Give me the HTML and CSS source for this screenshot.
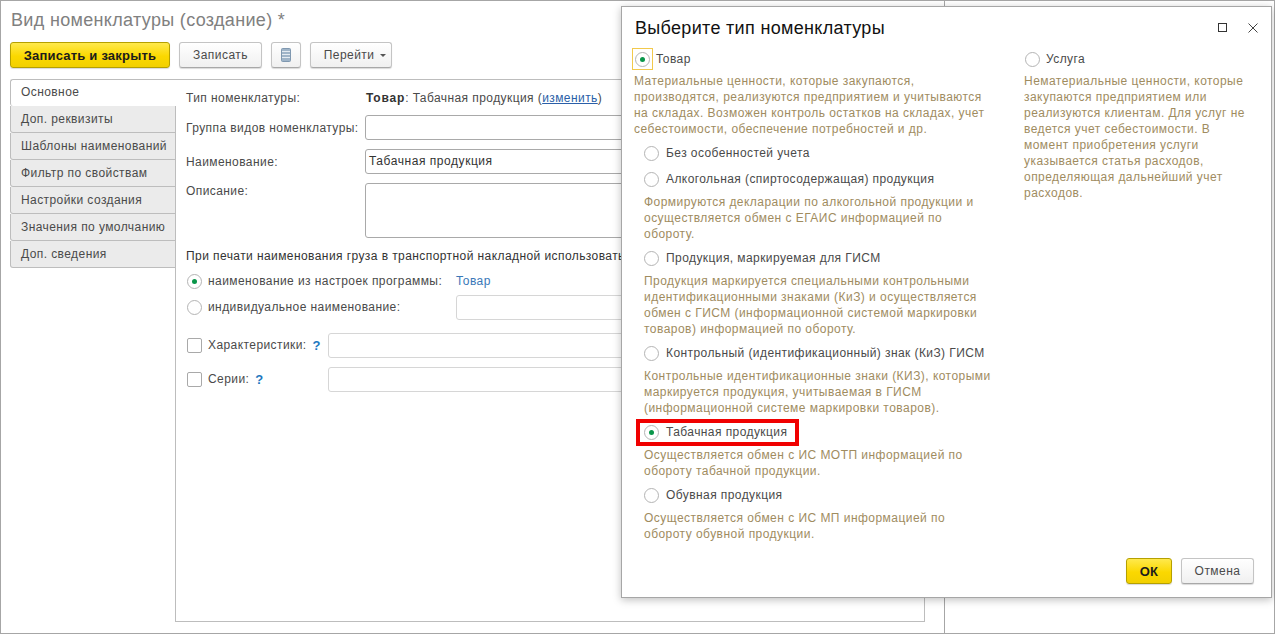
FILE: index.html
```html
<!DOCTYPE html>
<html lang="ru">
<head>
    <meta charset="UTF-8">
    <title>Вид номенклатуры (создание)</title>
    <link rel="stylesheet" href="styles.css">
</head>
<body>

<div class="page">
    <section class="form-window">
        <h1 class="form-title">Вид номенклатуры (создание) *</h1>

        <div class="toolbar">
            <button class="btn btn-primary btn-save-close">Записать и закрыть</button>
            <button class="btn btn-save">Записать</button>
            <button class="btn btn-icon" aria-label="Отчет">
                <svg width="10" height="14" viewBox="0 0 10 14">
                    <rect x="0.5" y="0.5" width="9" height="13" rx="1" fill="#9fb4c8" stroke="#7f98b0"/>
                    <path d="M1 3.5h8M1 6.5h8M1 9.5h8" stroke="#e4ebf2" stroke-width="1"/>
                </svg>
            </button>
            <button class="btn btn-goto">Перейти <span class="caret"></span></button>
        </div>

        <div class="tabs-area">
            <ul class="tabs">
                <li class="tab tab-active">Основное</li>
                <li class="tab">Доп. реквизиты</li>
                <li class="tab">Шаблоны наименований</li>
                <li class="tab">Фильтр по свойствам</li>
                <li class="tab">Настройки создания</li>
                <li class="tab">Значения по умолчанию</li>
                <li class="tab tab-last">Доп. сведения</li>
            </ul>

            <div class="panel">
                <div class="row row-type">
                    <span class="label">Тип номенклатуры:</span>
                    <span class="type-value"><b>Товар</b>: Табачная продукция (<a href="#">изменить</a>)</span>
                </div>
                <div class="row row-input">
                    <span class="label">Группа видов номенклатуры:</span>
                    <div class="field"></div>
                </div>
                <div class="row row-input">
                    <span class="label">Наименование:</span>
                    <div class="field">Табачная продукция</div>
                </div>
                <div class="row row-desc">
                    <span class="label">Описание:</span>
                    <div class="field field-area"></div>
                </div>

                <p class="print-note">При печати наименования груза в транспортной накладной использовать:</p>

                <div class="row row-radio">
                    <span class="radio radio-on"></span>
                    <span class="radio-text">наименование из настроек программы:</span>
                    <a class="value-link" href="#">Товар</a>
                </div>
                <div class="row row-radio row-radio-last">
                    <span class="radio"></span>
                    <span class="radio-text">индивидуальное наименование:</span>
                    <div class="field field-light"></div>
                </div>
                <div class="row row-check">
                    <div class="check-col">
                        <span class="check"></span>
                        <span class="check-text">Характеристики:</span>
                        <span class="hint">?</span>
                    </div>
                    <div class="field field-light"></div>
                </div>
                <div class="row row-check">
                    <div class="check-col">
                        <span class="check"></span>
                        <span class="check-text">Серии:</span>
                        <span class="hint">?</span>
                    </div>
                    <div class="field field-light"></div>
                </div>
            </div>
        </div>
    </section>
</div>

<!-- dialog over the form -->
<section class="dialog">
    <div class="dialog-head">
        <h2 class="dialog-title">Выберите тип номенклатуры</h2>
        <div class="window-btns">
            <span class="win-max"></span>
            <svg class="win-close" width="10" height="10" viewBox="0 0 10 10">
                <path d="M0.5 0.5l9 9M9.5 0.5l-9 9" stroke="#444" stroke-width="1" fill="none"/>
            </svg>
        </div>
    </div>

    <div class="dialog-body">
        <div class="col-left">
            <div class="option option-top">
                <span class="focus-box"><span class="radio radio-on"></span></span>
                <span class="option-name">Товар</span>
            </div>
            <p class="desc desc-top">Материальные ценности, которые закупаются,<br>производятся, реализуются предприятием и учитываются<br>на складах. Возможен контроль остатков на складах, учет<br>себестоимости, обеспечение потребностей и др.</p>

            <div class="sub-options">
                <div class="option option-first"><span class="radio"></span><span class="option-name">Без особенностей учета</span></div>

                <div class="option"><span class="radio"></span><span class="option-name">Алкогольная (спиртосодержащая) продукция</span></div>
                <p class="desc">Формируются декларации по алкогольной продукции и<br>осуществляется обмен с ЕГАИС информацией по<br>обороту.</p>

                <div class="option"><span class="radio"></span><span class="option-name">Продукция, маркируемая для ГИСМ</span></div>
                <p class="desc">Продукция маркируется специальными контрольными<br>идентификационными знаками (КиЗ) и осуществляется<br>обмен с ГИСМ (информационной системой маркировки<br>товаров) информацией по обороту.</p>

                <div class="option"><span class="radio"></span><span class="option-name">Контрольный (идентификационный) знак (КиЗ) ГИСМ</span></div>
                <p class="desc">Контрольные идентификационные знаки (КИЗ), которыми<br>маркируется продукция, учитываемая в ГИСМ<br>(информационной системе маркировки товаров).</p>

                <div class="option option-marked">
                    <span class="radio radio-on"></span><span class="option-name">Табачная продукция</span>
                    <span class="red-mark"></span>
                </div>
                <p class="desc">Осуществляется обмен с ИС МОТП информацией по<br>обороту табачной продукции.</p>

                <div class="option"><span class="radio"></span><span class="option-name">Обувная продукция</span></div>
                <p class="desc">Осуществляется обмен с ИС МП информацией по<br>обороту обувной продукции.</p>
            </div>
        </div>

        <div class="col-right">
            <div class="option option-top">
                <span class="radio"></span>
                <span class="option-name">Услуга</span>
            </div>
            <p class="desc desc-top">Нематериальные ценности, которые<br>закупаются предприятием или<br>реализуются клиентам. Для услуг не<br>ведется учет себестоимости. В<br>момент приобретения услуги<br>указывается статья расходов,<br>определяющая дальнейший учет<br>расходов.</p>
        </div>
    </div>

    <div class="dialog-foot">
        <button class="btn btn-primary btn-ok">ОК</button>
        <button class="btn btn-cancel">Отмена</button>
    </div>
</section>

</body>
</html>
```

FILE: styles.css
```css
* {
    box-sizing: border-box;
}

body {
    margin: 0;
    background: white;
    font-family: "Liberation Sans", Arial, sans-serif;
    font-size: 12px;
    letter-spacing: 0.42px;
    color: #4a4a4a;
    overflow: hidden;
}

.page {
    width: 1275px;
    height: 634px;
    border: 1px solid #a6a6a6;
}

.form-window {
    width: 944px;
    height: 632px;
    border-right: 1px solid #a6a6a6;
    padding: 0 19px 0 9px;
}

.form-title {
    margin: 0;
    height: 41px;
    padding: 9px 0 0 1px;
    font-size: 18px;
    font-weight: normal;
    line-height: 21px;
    letter-spacing: 0.33px;
    color: #808080;
}

/* buttons */
.btn {
    display: inline-block;
    height: 26px;
    padding: 0;
    border: 1px solid #c4c4c4;
    border-bottom-color: #a8a8a8;
    border-radius: 3px;
    background: linear-gradient(to bottom, #ffffff, #f0f0f0);
    box-shadow: 0 1px 1px rgba(0, 0, 0, 0.15);
    font: 12px "Liberation Sans", Arial, sans-serif;
    letter-spacing: 0.45px;
    color: #4a4a4a;
}

.btn-primary {
    border-color: #b5a000;
    background: linear-gradient(to bottom, #ffe94d, #fbd800 55%, #f2d000);
    font-size: 13px;
    font-weight: bold;
    letter-spacing: 0.2px;
    color: #1c1c1c;
}

.toolbar {
    display: flex;
    height: 37px;
    gap: 9px;
}

.btn-save-close { width: 160px; }
.btn-save { width: 83px; }
.btn-icon { width: 30px; padding-top: 2px; }
.btn-goto { width: 82px; padding-left: 8px; }

.caret {
    display: inline-block;
    margin-left: 2px;
    vertical-align: 2px;
    border-left: 3px solid transparent;
    border-right: 3px solid transparent;
    border-top: 3px solid #555;
}

/* tabs */
.tabs-area {
    display: flex;
    height: 543px;
}

.tabs {
    list-style: none;
    margin: 0;
    padding: 0;
    width: 166px;
    flex: none;
    position: relative;
    z-index: 1;
}

.tab {
    height: 27px;
    padding: 0 0 0 10px;
    line-height: 27px;
    background: #ebebeb;
    border: 1px solid #bdbdbd;
    border-top: 0;
    border-radius: 0 0 0 3px;
    white-space: nowrap;
}

.tab-active {
    line-height: 25px;
    background: white;
    border-top: 1px solid #bdbdbd;
    border-right: 0;
    border-bottom: 0;
    border-radius: 3px 0 0 3px;
}

.panel {
    flex: 1;
    margin-left: -1px;
    padding: 0 0 0 10px;
    border: 1px solid #bdbdbd;
    overflow: hidden;
}

/* form rows */
.row {
    display: flex;
    align-items: center;
}

.label {
    width: 179px;
    flex: none;
    padding-top: 1px;
    white-space: nowrap;
}

.row-type {
    height: 35px;
}

.row-type .label {
    width: 180px;
}

.type-value {
    white-space: nowrap;
}

.type-value b {
    letter-spacing: 0.8px;
    color: #333;
}

.type-value a {
    color: #2b5fa8;
}

.field {
    flex: 1;
    height: 25px;
    margin-right: 9px;
    padding: 0 3px;
    border: 1px solid #a9a9a9;
    border-radius: 3px;
    line-height: 23px;
    letter-spacing: 0.55px;
    color: #333;
}

.field-light {
    border-color: #d6d6d6;
}

.row-input {
    height: 34px;
    padding-bottom: 10px;
}

.row-desc {
    align-items: flex-start;
    height: 54px;
}

.field-area {
    height: 55px;
}

.print-note {
    margin: 12px 0 0;
    height: 19px;
    line-height: 15px;
    white-space: nowrap;
    color: #333;
}

.radio {
    display: inline-block;
    position: relative;
    flex: none;
    width: 15px;
    height: 15px;
    border: 1px solid #b4b4b4;
    border-radius: 50%;
    background: white;
}

.radio-on::after {
    content: "";
    position: absolute;
    left: 4px;
    top: 4px;
    width: 5px;
    height: 5px;
    border-radius: 50%;
    background: #0a964a;
}

.row-radio .radio {
    margin-left: 1px;
}

.radio-text {
    flex: none;
    width: 248px;
    margin-left: 6px;
    white-space: nowrap;
}

.row-radio {
    height: 26px;
}

.row-radio-last {
    margin-bottom: 8px;
}

.value-link {
    color: #3a78b8;
    text-decoration: none;
}

.check-col {
    display: flex;
    align-items: center;
    flex: none;
    width: 142px;
}

.check {
    flex: none;
    width: 15px;
    height: 15px;
    margin-left: 1px;
    border: 1px solid #a9a9a9;
    border-radius: 2px;
}

.check-text {
    margin-left: 6px;
    white-space: nowrap;
}

.hint {
    margin-left: 6px;
    font-size: 13px;
    font-weight: bold;
    color: #1c78c0;
}

.row-check {
    height: 34px;
}

/* dialog */
.dialog {
    position: absolute;
    left: 621px;
    top: 6px;
    width: 651px;
    height: 592px;
    background: white;
    border: 1px solid #a6a6a6;
    box-shadow: 0 2px 8px rgba(0, 0, 0, 0.25);
    display: flex;
    flex-direction: column;
}

.dialog-head {
    display: flex;
    justify-content: space-between;
    height: 41px;
    padding: 11px 13px 0 13px;
}

.dialog-title {
    margin: 0;
    font-size: 18px;
    font-weight: normal;
    line-height: 21px;
    letter-spacing: 0.32px;
    color: #111;
}

.window-btns {
    display: flex;
    gap: 21px;
    padding-top: 5px;
}

.win-max {
    width: 9px;
    height: 9px;
    border: 1px solid #333;
}

.dialog-body {
    display: flex;
    flex: 1;
}

.col-left {
    width: 390px;
    padding-left: 12px;
}

.col-right {
    margin-left: 12px;
    width: 240px;
}

.option {
    display: flex;
    align-items: center;
    position: relative;
    height: 22px;
    white-space: nowrap;
}

.option-name {
    margin-left: 7px;
}

.focus-box {
    display: flex;
    align-items: center;
    justify-content: center;
    width: 21px;
    height: 22px;
    margin-left: -2px;
    border: 1px solid #f2c94c;
}

.focus-box + .option-name {
    margin-left: 3px;
}

.col-right .option {
    padding-left: 1px;
}

.col-right .option-name {
    margin-left: 6px;
}

.desc {
    margin: 0;
    line-height: 16px;
    letter-spacing: 0.46px;
    color: #a08c5f;
    white-space: nowrap;
}

.desc-top {
    margin-top: 3px;
}

.sub-options {
    padding-left: 10px;
}

.sub-options .option {
    margin-top: 4px;
    height: 24px;
}

.sub-options .desc {
    margin-top: 3px;
}

.sub-options .option-first {
    margin-top: 6px;
    height: 20px;
}

.red-mark {
    position: absolute;
    left: -8px;
    top: -1px;
    width: 163px;
    height: 27px;
    border: 4px solid #f00000;
}

.dialog-foot {
    display: flex;
    justify-content: flex-end;
    gap: 9px;
    height: 39px;
    padding-right: 17px;
}

.btn-ok { width: 46px; }
.btn-cancel { width: 73px; }
```
